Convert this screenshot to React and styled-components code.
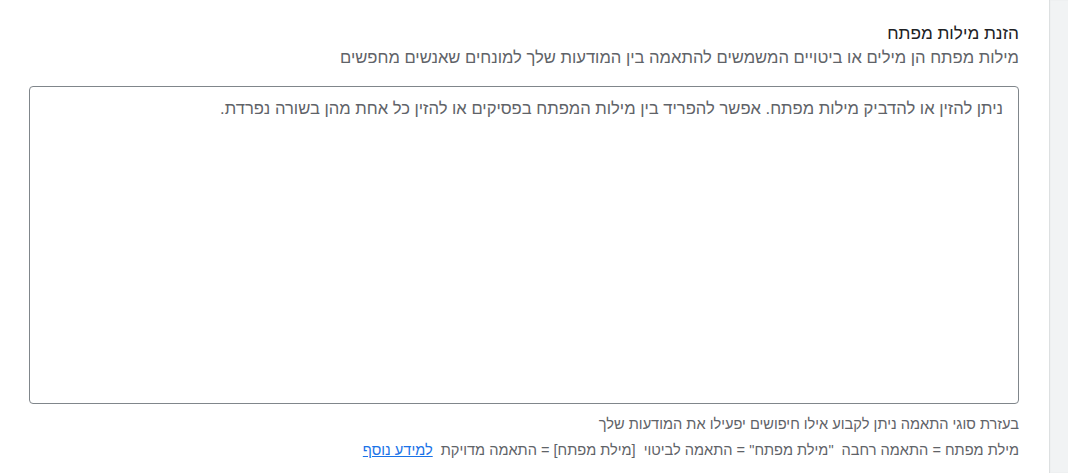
import React from 'react'
import styled, { createGlobalStyle } from 'styled-components'

const GlobalStyle = createGlobalStyle`
  html, body {
    margin: 0;
    padding: 0;
    background: #ffffff;
    font-family: "Liberation Sans", Arial, "Noto Sans", sans-serif;
  }
`
const Page = styled.div`
  display: flex;
  height: 473px;
  overflow: hidden;
`
const Main = styled.div`
  width: 1049px;
  flex-shrink: 0;
  direction: rtl;
  box-sizing: border-box;
  padding: 21px 30px 0 29px;
  display: flex;
  flex-direction: column;
`
const Side = styled.div`
  flex: 1;
  background: #f1f3f4;
  box-shadow: inset 1px 0 1px rgba(60, 64, 67, 0.12);
`
const Title = styled.h2`
  margin: 0;
  font-size: 17.2px;
  line-height: 24px;
  font-weight: 400;
  color: #202124;
`
const Subtitle = styled.p`
  margin: 1px 0 0;
  font-size: 16.6px;
  line-height: 24px;
  color: #5f6368;
`
const Keywords = styled.textarea`
  margin-top: 16px;
  height: 318px;
  box-sizing: border-box;
  border: 1px solid #80868b;
  border-radius: 4px;
  padding: 10px 15px;
  font-family: inherit;
  font-size: 16.6px;
  line-height: 24px;
  color: #202124;
  resize: none;
  outline: none;
  direction: rtl;
  &::placeholder {
    color: #5f6368;
    opacity: 1;
  }
`
const Help = styled.p`
  margin: ${p => p.$first ? '10px' : '6px'} 0 0;
  font-size: 14.6px;
  line-height: 20px;
  color: #5f6368;
  display: flex;
  gap: 8px;
`
const Link = styled.a`
  color: #1a73e8;
  text-decoration: underline;
`

const App = () => {
  return (
    <Page>
      <GlobalStyle />
      <Main>
        <Title>הזנת מילות מפתח</Title>
        <Subtitle>מילות מפתח הן מילים או ביטויים המשמשים להתאמה בין המודעות שלך למונחים שאנשים מחפשים</Subtitle>
        <Keywords placeholder="ניתן להזין או להדביק מילות מפתח. אפשר להפריד בין מילות המפתח בפסיקים או להזין כל אחת מהן בשורה נפרדת." />
        <Help $first>בעזרת סוגי התאמה ניתן לקבוע אילו חיפושים יפעילו את המודעות שלך</Help>
        <Help>
          <span>מילת מפתח = התאמה רחבה</span>
          <span>"מילת מפתח" = התאמה לביטוי</span>
          <span>[מילת מפתח] = התאמה מדויקת</span>
          <Link href="#">למידע נוסף</Link>
        </Help>
      </Main>
      <Side />
    </Page>
  )
}

export default App
